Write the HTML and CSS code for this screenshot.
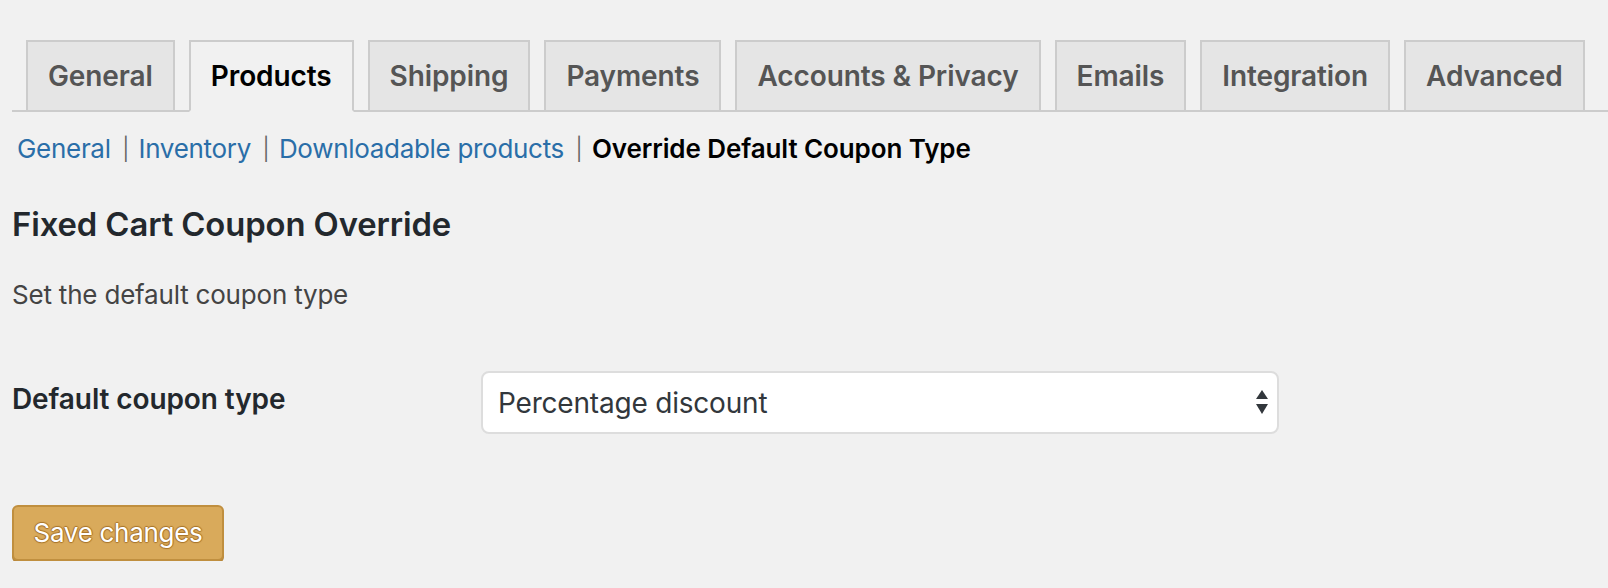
FILE: index.html
```html
<!DOCTYPE html>
<html lang="en">
<head>
<meta charset="utf-8">
<title>Products settings</title>
<link rel="stylesheet" href="styles.css">
</head>
<body>
<div class="wrap">
  <nav class="tabs">
    <a class="tab" href="#">General</a>
    <a class="tab active" href="#">Products</a>
    <a class="tab" href="#">Shipping</a>
    <a class="tab" href="#">Payments</a>
    <a class="tab" href="#">Accounts &amp; Privacy</a>
    <a class="tab" href="#">Emails</a>
    <a class="tab" href="#">Integration</a>
    <a class="tab" href="#">Advanced</a>
  </nav>
  <ul class="subnav">
    <li><a href="#">General</a><span class="sep">|</span></li><li><a href="#">Inventory</a><span class="sep">|</span></li><li><a href="#">Downloadable products</a><span class="sep">|</span></li><li><span class="current">Override Default Coupon Type</span></li>
  </ul>
  <h2 class="heading">Fixed Cart Coupon Override</h2>
  <p class="desc">Set the default coupon type</p>
  <div class="field-row">
    <label class="field-label" for="coupon-type">Default coupon type</label>
    <div class="select-wrap">
      <select id="coupon-type" class="select">
        <option>Percentage discount</option>
        <option>Fixed cart discount</option>
        <option>Fixed product discount</option>
      </select>
      <svg class="select-arrows" width="14" height="26" viewBox="0 0 14 26" aria-hidden="true">
        <polygon points="7,0 13,9 1,9" fill="#32373c"/>
        <polygon points="1,14 13,14 7,24" fill="#32373c"/>
      </svg>
    </div>
  </div>
  <button class="save" type="button">Save changes</button>
</div>
</body>
</html>
```
FILE: styles.css
```css
html, body {
  margin: 0;
  padding: 0;
}
body {
  background: #f1f1f1;
  font-family: Inter, "Noto Sans", "Liberation Sans", sans-serif;
  color: #444;
}
.wrap {
  padding: 40px 0 0 12px;
}
.tabs {
  display: flex;
  border-bottom: 2px solid #ccc;
}
.tab {
  display: block;
  margin: 0 0 -2px 14px;
  padding: 10px 20px;
  border: 2px solid #ccc;
  background: #e5e5e5;
  color: #555;
  font-size: 28px;
  line-height: 48px;
  font-weight: 600;
  letter-spacing: -0.1px;
  text-decoration: none;
  white-space: nowrap;
}
.tab.active {
  background: #f1f1f1;
  border-bottom-color: #f1f1f1;
  color: #000;
}
.subnav {
  list-style: none;
  margin: 19px 0 0;
  padding: 0 0 0 5px;
  font-size: 26px;
  line-height: 36px;
  letter-spacing: -0.3px;
  white-space: nowrap;
}
.subnav li {
  display: inline;
}
.subnav a {
  color: #2a6ea8;
  text-decoration: none;
}
.sep {
  display: inline-block;
  margin: 0 9px 0 11px;
  color: #666;
  font-weight: 300;
  transform: scaleY(0.85);
}
.subnav .current {
  color: #000;
  font-weight: 600;
  letter-spacing: -0.1px;
}
.heading {
  margin: 37px 0 0;
  font-size: 32.8px;
  line-height: 40px;
  font-weight: 600;
  letter-spacing: -0.1px;
  color: #23282d;
}
.desc {
  margin: 33px 0 0;
  font-size: 26px;
  line-height: 36px;
  letter-spacing: -0.2px;
  color: #444;
}
.field-row {
  display: flex;
  margin-top: 58px;
}
.field-label {
  width: 469px;
  flex: none;
  margin-top: 10px;
  font-size: 28px;
  line-height: 36px;
  font-weight: 600;
  letter-spacing: -0.1px;
  color: #23282d;
}
.select-wrap {
  position: relative;
  width: 798px;
  height: 63px;
}
.select {
  appearance: none;
  -webkit-appearance: none;
  box-sizing: border-box;
  width: 100%;
  height: 100%;
  margin: 0;
  padding: 0 40px 0 15px;
  border: 2px solid #ddd;
  border-radius: 8px;
  background: #fff;
  color: #32373c;
  font-family: inherit;
  font-size: 28px;
  letter-spacing: -0.2px;
  outline: none;
}
.select-arrows {
  position: absolute;
  right: 10px;
  top: 19px;
  pointer-events: none;
}
.save {
  display: block;
  box-sizing: border-box;
  width: 212px;
  height: 56px;
  margin-top: 71px;
  padding: 0;
  border: 2px solid #c08f3f;
  border-radius: 6px;
  background: #d9aa5b;
  box-shadow: 0 2px 0 #b8873a;
  color: #fff;
  font-family: inherit;
  font-size: 26px;
  line-height: 52px;
  letter-spacing: -0.3px;
  white-space: nowrap;
  text-align: center;
  text-shadow: 0 -1px 1px #a8742a, 1px 0 1px #a8742a, 0 1px 1px #a8742a, -1px 0 1px #a8742a;
  cursor: pointer;
}
```
